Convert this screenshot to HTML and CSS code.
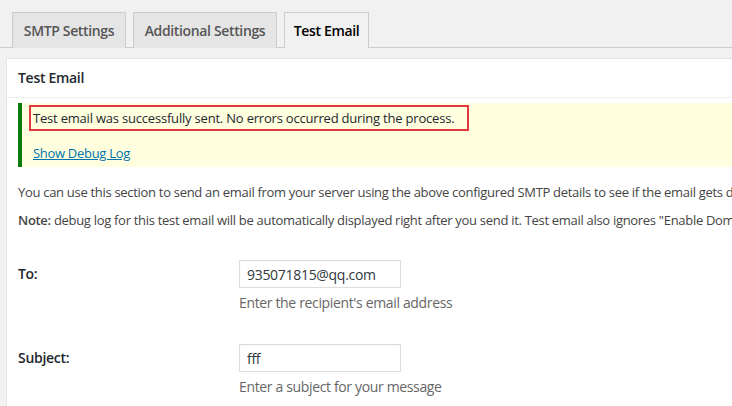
FILE: index.html
```html
<!DOCTYPE html>
<html lang="en">
<head>
<meta charset="utf-8">
<title>Test Email</title>
<link rel="stylesheet" href="styles.css">
</head>
<body>
<div class="page">
  <nav class="tabs">
    <a class="tab tab-smtp" href="#">SMTP Settings</a>
    <a class="tab tab-additional" href="#">Additional Settings</a>
    <a class="tab tab-test active" href="#">Test Email</a>
  </nav>
  <section class="panel">
    <h2 class="panel-head">Test Email</h2>
    <div class="panel-body">
      <div class="notice">
        <div class="notice-msg"><span class="hl">Test email was successfully sent. No errors occurred during the process.</span></div>
        <p class="notice-link"><a href="#">Show Debug Log</a></p>
      </div>
      <p class="intro">You can use this section to send an email from your server using the above configured SMTP details to see if the email gets delivered.</p>
      <p class="note"><strong>Note:</strong> debug log for this test email will be automatically displayed right after you send it. Test email also ignores "Enable Domain Check" option.</p>
      <div class="form-grid">
        <label class="field-label" for="to">To:</label>
        <div class="field">
          <input class="text-input" id="to" type="text" value="935071815@qq.com">
          <p class="desc">Enter the recipient's email address</p>
        </div>
        <label class="field-label" for="subject">Subject:</label>
        <div class="field">
          <input class="text-input" id="subject" type="text" value="fff">
          <p class="desc">Enter a subject for your message</p>
        </div>
      </div>
    </div>
  </section>
</div>
</body>
</html>
```

FILE: styles.css
```css
html, body {
  margin: 0;
  padding: 0;
  height: 100%;
  overflow: hidden;
}

body {
  background: #f1f1f1;
  font-family: "Open Sans", "Noto Sans", "DejaVu Sans", sans-serif;
  font-size: 13px;
  color: #444;
  letter-spacing: -0.3px;
}

.page {
  width: 1100px;
}

/* Tabs */
.tabs {
  display: flex;
  gap: 7px;
  height: 35px;
  padding: 12px 0 0 12px;
  border-bottom: 1px solid #ccc;
}

.tab {
  box-sizing: border-box;
  height: 36px;
  display: flex;
  align-items: center;
  justify-content: center;
  border: 1px solid #ccc;
  border-bottom: none;
  background: #e5e5e5;
  color: #555;
  font-size: 14px;
  font-weight: 600;
  text-decoration: none;
  letter-spacing: -0.35px;
}

.tab-smtp { width: 114px; }
.tab-additional { width: 144px; }
.tab-test { width: 85px; }

.tab.active {
  background: #f1f1f1;
  color: #000;
  position: relative;
  z-index: 1;
}

/* Panel */
.panel {
  margin: 10px 0 0 6px;
  background: #fff;
  border: 1px solid #e5e5e5;
}

.panel-head {
  margin: 0;
  height: 38px;
  line-height: 38px;
  padding: 0 11px;
  font-size: 14px;
  font-weight: 600;
  color: #23282d;
  border-bottom: 1px solid #eee;
}

.panel-body {
  padding: 5px 0 60px 11px;
}

/* Notice */
.notice {
  background: #ffffe0;
  border-left: 4px solid #0c7d0c;
  padding: 2px 0 5px 11px;
}

.notice-msg {
  display: flex;
}

.hl {
  display: block;
  border: 2px solid #e2393d;
  padding: 2px 13px 2px 2px;
  margin-left: -4px;
  line-height: 18px;
  color: #23282d;
  letter-spacing: -0.2px;
}

.notice-link {
  margin: 13px 0 0;
  line-height: 18px;
}

.notice-link a {
  color: #0073aa;
  text-decoration: underline;
}

.intro, .note {
  margin: 0;
  line-height: 18px;
  white-space: nowrap;
}

.intro { margin-top: 16px; }
.note { margin-top: 10px; }

.note strong {
  font-weight: 600;
  color: #444;
}

/* Form */
.form-grid {
  display: grid;
  grid-template-columns: 221px 1fr;
  row-gap: 32px;
  margin-top: 31px;
}

.field-label {
  display: flex;
  align-items: center;
  height: 27px;
  font-size: 14px;
  font-weight: 600;
  color: #23282d;
}

.text-input {
  box-sizing: border-box;
  display: block;
  width: 162px;
  height: 28px;
  margin: 0;
  padding: 0 7px;
  border: 1px solid #ddd;
  box-shadow: inset 0 1px 2px rgba(0,0,0,0.04);
  font-family: inherit;
  font-size: 14px;
  color: #32373c;
  letter-spacing: -0.3px;
  background: #fff;
}

.desc {
  margin: 6px 0 0;
  line-height: 18px;
  font-size: 14px;
  color: #666;
  letter-spacing: -0.35px;
}
```
